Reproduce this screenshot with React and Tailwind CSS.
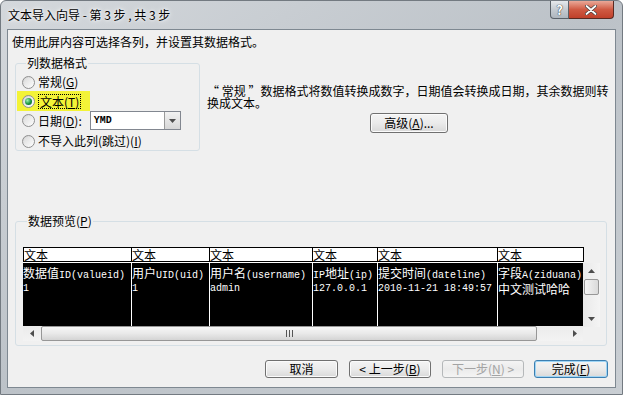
import React from 'react'

const ui = "font-['Noto_Sans_CJK_SC','Liberation_Sans',sans-serif]"
const mono = "font-['Liberation_Mono','Noto_Sans_CJK_SC',monospace]"

const columns = [
  { w: 'w-[108px]', dw: 'w-[109px]', rows: ['数据值ID(valueid)', '1'] },
  { w: 'w-[78px]', dw: 'w-[78px]', rows: ['用户UID(uid)', '1'] },
  { w: 'w-[103px]', dw: 'w-[103px]', rows: ['用户名(username)', 'admin'] },
  { w: 'w-[65px]', dw: 'w-[65px]', rows: ['IP地址(ip)', '127.0.0.1'] },
  { w: 'w-[120px]', dw: 'w-[120px]', rows: ['提交时间(dateline)', '2010-11-21 18:49:57'] },
  { w: 'w-[85px]', dw: 'w-[85px]', rows: ['字段A(ziduana)', '中文测试哈哈'], last: true },
]

// CJK glyphs at 12px, latin glyphs at the 6px-wide monospace
const Mixed = ({ text }) =>
  text.split(/([\u4e00-\u9fff]+)/).filter(Boolean).map((part, i) =>
    /[\u4e00-\u9fff]/.test(part)
      ? <span key={i} className={`text-[12px] ${ui}`}>{part}</span>
      : <span key={i}>{part}</span>
  )

const Radio = ({ checked }) => (
  <span className="w-[13px] h-[13px] rounded-full border border-[#8f8f8f] bg-gradient-to-br from-[#cfcfcf] via-[#ececec] to-[#ffffff] flex items-center justify-center shrink-0">
    <span className="w-[9px] h-[9px] rounded-full bg-gradient-to-br from-[#dcdcdc] to-[#fbfbfb] flex items-center justify-center">
      {checked && <span className="w-[7px] h-[7px] rounded-full bg-[radial-gradient(circle_at_35%_35%,#9ff0b4,#17923c_55%,#0a5c22)]" />}
    </span>
  </span>
)

const Btn = ({ children, className = '', disabled, isDefault }) => (
  <div
    className={`h-[18px] flex items-center justify-center rounded-[3px] border text-[12px] leading-none bg-gradient-to-b from-[#f4f4f4] via-[#ebebeb] to-[#d9d9d9] ${
      disabled
        ? 'border-[#b5b8ba] text-[#a3a3a3] from-[#f4f4f4] to-[#f4f4f4]'
        : isDefault
        ? 'border-[#3c7fb1] text-black shadow-[inset_0_0_0_1px_#9fd5f5]'
        : 'border-[#707070] text-black shadow-[inset_0_0_0_1px_#fbfbfb]'
    } ${className}`}
  >
    {children}
  </div>
)

const Tri = ({ dir }) => {
  const pts = {
    up: '0,4 3.5,0 7,4',
    down: '0,0 7,0 3.5,4',
    left: '4,0 4,7 0,3.5',
    right: '0,0 0,7 4,3.5',
  }[dir]
  const vertical = dir === 'up' || dir === 'down'
  return (
    <svg width={vertical ? 7 : 4} height={vertical ? 4 : 7}>
      <polygon points={pts} fill="#4d4d4d" />
    </svg>
  )
}

export default function App() {
  return (
    <div lang="zh-CN" className={`w-[623px] h-[395px] flex flex-col bg-gradient-to-br from-[#d4d8dc] via-[#bcc2c8] to-[#c9ced3] border border-[#737a81] rounded-t-[6px] ${ui}`}>
      {/* Title bar */}
      <div className="h-[28px] flex items-start shrink-0">
        <span className="mt-[6px] ml-[7px] text-[12px] leading-[16px] text-black [text-shadow:0_0_6px_#ffffff,0_0_3px_#ffffff]">
          文本导入向导 - 第 3 步 , 共 3 步
        </span>
        <div className="ml-auto mr-[8px] flex h-[18px]">
          <div className="w-[19px] h-[18px] rounded-bl-[4px] border border-t-0 border-[#5a6168] bg-gradient-to-b from-[#e6e9ec] via-[#c5cbd1] to-[#aeb6be] flex items-center justify-center">
            <span className="text-[13px] font-bold leading-none text-white [text-shadow:0_0_1px_#333,0_0_1px_#333]">?</span>
          </div>
          <div className="w-[45px] h-[18px] rounded-br-[4px] border border-l-0 border-t-0 border-[#5a2a22] bg-gradient-to-b from-[#e9a898] via-[#cf5a43] to-[#c0402a] flex items-center justify-center">
            <svg width="12" height="10" viewBox="0 0 12 10">
              <path d="M1.5 1 L10.5 9 M10.5 1 L1.5 9" stroke="#3b3b3b" strokeWidth="3.2" strokeLinecap="round" />
              <path d="M1.5 1 L10.5 9 M10.5 1 L1.5 9" stroke="#ffffff" strokeWidth="1.8" strokeLinecap="round" />
            </svg>
          </div>
        </div>
      </div>

      {/* Client area */}
      <div className="mx-[6px] h-[359px] border border-[#7e8891] bg-[#f0f0f0] flex flex-col text-[12px] text-black">
        <p className="pl-[4px] pt-[4px] leading-[16px]">使用此屏内容可选择各列，并设置其数据格式。</p>

        <div className="flex mt-[6px]">
          {/* Column data format */}
          <fieldset className="ml-[7px] w-[185px] h-[95px] border border-[#d5dfe5] rounded-[3px] pl-[6px]">
            <legend className="ml-[4px] px-[1px] leading-[14px]">列数据格式</legend>
            <div className="flex flex-col pt-[4px]">
              <label className="h-[16px] flex items-center gap-[3px]">
                <Radio />
                <span>常规(<span className="underline">G</span>)</span>
              </label>
              <div className="mt-[1px] -ml-[5px] w-[73px] h-[20px] bg-[#f3f337] flex items-center pl-[5px] gap-[3px]">
                <Radio checked />
                <span className="border border-dotted border-black px-[1px] leading-[13px]">文本(<span className="underline">T</span>)</span>
              </div>
              <div className="h-[19px] flex items-center gap-[3px]">
                <Radio />
                <span>日期(<span className="underline">D</span>):</span>
                <div className="ml-[5px] w-[91px] h-[19px] border border-[#828790] bg-white flex items-stretch">
                  <span className={`flex-1 pl-[3px] text-[10px] font-bold leading-[17px] ${mono}`}>YMD</span>
                  <span className="w-[16px] border-l border-[#9a9a9a] bg-gradient-to-b from-[#f2f2f2] to-[#d7d7d7] flex items-center justify-center">
                    <Tri dir="down" />
                  </span>
                </div>
              </div>
              <label className="mt-[3px] h-[16px] flex items-center gap-[3px]">
                <Radio />
                <span>不导入此列(跳过)(<span className="underline">I</span>)</span>
              </label>
            </div>
          </fieldset>

          {/* Description and advanced button */}
          <div className="ml-[7px] flex flex-col">
            <p className="mt-[29px] leading-[12px] whitespace-nowrap">
              “ 常规 ”数据格式将数值转换成数字，日期值会转换成日期，其余数据则转
              <br />
              换成文本。
            </p>
            <Btn className="mt-[4px] ml-[163px] w-[78px] h-[20px]">
              高级(<span className="underline">A</span>)...
            </Btn>
          </div>
        </div>

        {/* Data preview */}
        <fieldset className="mt-[63px] ml-[7px] w-[592px] h-[132px] border border-[#d5dfe5] rounded-[3px] pl-[7px] pt-[19px]">
          <legend className="ml-[4px] px-[1px] leading-[14px]">数据预览(<span className="underline">P</span>)</legend>
          <div className="flex flex-col w-[578px]">
            {/* Header row */}
            <div className="w-[561px] h-[15px] flex border border-black bg-white">
              {columns.map((c, i) => (
                <div key={i} className={`${c.w} h-full leading-[13px] ${c.last ? '' : 'border-r border-black'}`}>文本</div>
              ))}
            </div>
            {/* Data + vertical scrollbar */}
            <div className="flex h-[64px]">
              <div className={`w-[560px] h-full border-t border-white bg-black flex overflow-hidden text-white text-[10px] ${mono}`}>
                {columns.map((c, i) => (
                  <div key={i} className={`${c.dw} h-full shrink-0 pt-[2px] overflow-hidden whitespace-nowrap ${c.last ? '' : 'border-r border-white'}`}>
                    {c.rows.map((r, j) => (
                      <div key={j} className="h-[16px] leading-[16px]"><Mixed text={r} /></div>
                    ))}
                  </div>
                ))}
              </div>
              <div className="w-[17px] h-full mt-[1px] bg-gradient-to-r from-[#e9e9e9] to-[#f4f4f4] flex flex-col items-center">
                <div className="h-[16px] flex items-center"><Tri dir="up" /></div>
                <div className="w-[15px] h-[16px] rounded-[2px] border border-[#979797] bg-gradient-to-r from-[#f5f5f5] to-[#dadada]" />
                <div className="mt-auto h-[16px] flex items-center"><Tri dir="down" /></div>
              </div>
            </div>
            {/* Horizontal scrollbar */}
            <div className="flex h-[15px]">
              <div className="w-[560px] h-full flex items-center bg-gradient-to-b from-[#ebebeb] to-[#f3f3f3]">
                <div className="w-[18px] flex justify-center"><Tri dir="left" /></div>
                <div className="w-[496px] h-[15px] rounded-[2px] border border-[#979797] bg-gradient-to-b from-[#f6f6f6] via-[#e9e9e9] to-[#d4d4d4] flex items-center justify-center">
                  <svg width="7" height="7">
                    <path d="M0.5 0 V7 M3.5 0 V7 M6.5 0 V7" stroke="#555" strokeWidth="1" />
                  </svg>
                </div>
                <div className="ml-auto w-[17px] flex justify-center"><Tri dir="right" /></div>
              </div>
            </div>
          </div>
        </fieldset>

        {/* Buttons */}
        <div className="flex mt-[14px] pl-[257px]">
          <Btn className="w-[73px]">取消</Btn>
          <Btn className="ml-[11px] w-[82px]">&lt; 上一步(<span className="underline">B</span>)</Btn>
          <Btn className="ml-[11px] w-[82px]" disabled>下一步(<span className="underline">N</span>) &gt;</Btn>
          <Btn className="ml-[10px] w-[74px]" isDefault>完成(<span className="underline">F</span>)</Btn>
        </div>
      </div>
    </div>
  )
}
